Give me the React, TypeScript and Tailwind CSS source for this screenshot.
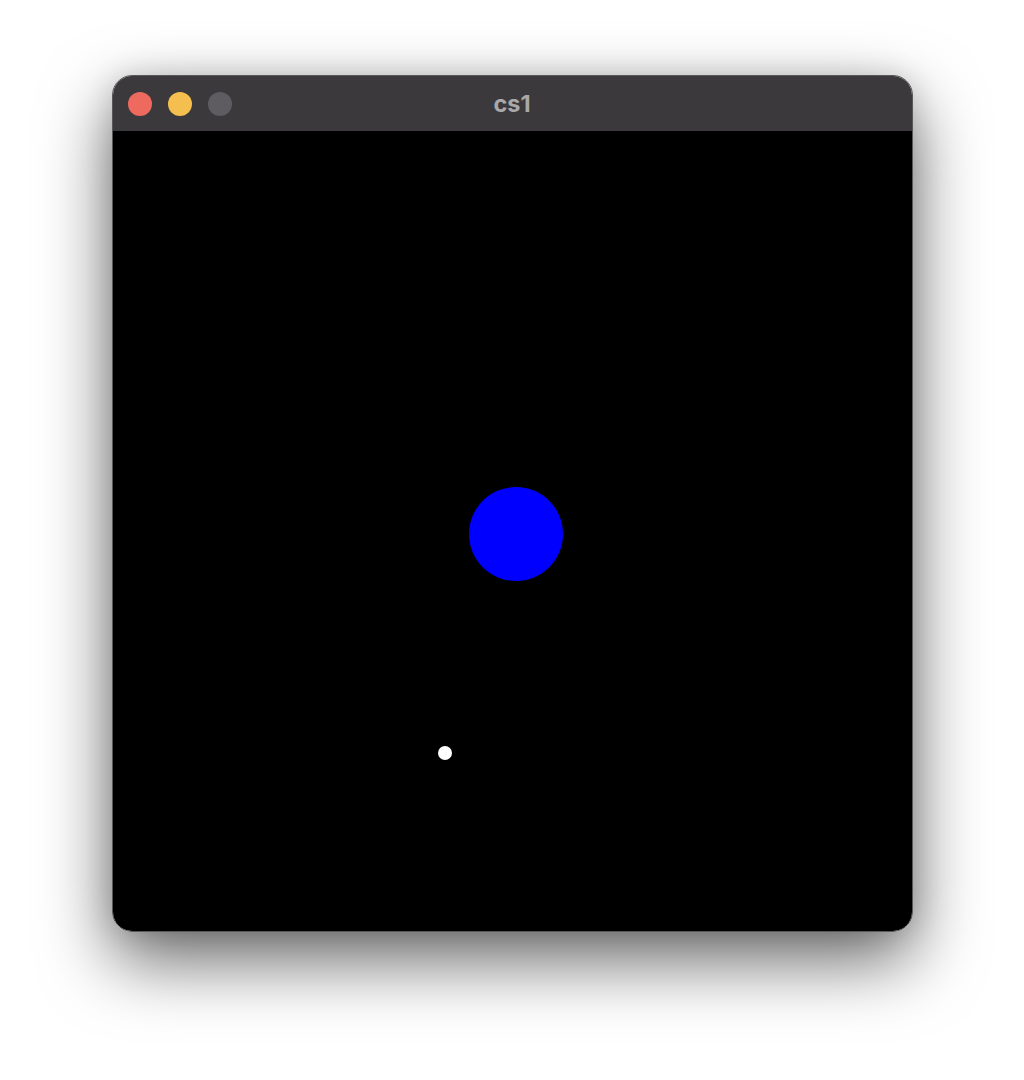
import React from 'react';

const TrafficLight: React.FC<{ color: string }> = ({ color }) => (
  <div className={`h-6 w-6 rounded-full ${color}`} />
);

export default function App() {
  return (
    <div className="min-h-[1080px] w-full bg-white flex justify-center pt-[75px] font-['Inter',sans-serif]">
      {/* Window */}
      <div className="w-[801px] h-[857px] flex flex-col rounded-[20px] overflow-hidden border border-[#58575a] shadow-[0_0_28px_rgba(0,0,0,0.12),0_28px_70px_rgba(0,0,0,0.6)]">
        {/* Title bar */}
        <div className="relative h-[55px] shrink-0 bg-[#3b393c] flex items-center px-[15px] gap-4">
          <TrafficLight color="bg-[#ee6a5f]" />
          <TrafficLight color="bg-[#f5bf4f]" />
          <TrafficLight color="bg-[#5e5c60]" />
          <span className="absolute inset-x-0 text-center text-[23.5px] font-bold text-[#a9a8aa] pointer-events-none">
            cs1
          </span>
        </div>

        {/* Canvas */}
        <div className="relative flex-1 bg-black">
          <div className="absolute left-[356px] top-[356px] h-[94px] w-[94px] rounded-full bg-[#0000ff]" />
          <div className="absolute left-[325px] top-[615px] h-[14px] w-[14px] rounded-full bg-white" />
        </div>
      </div>
    </div>
  );
}
